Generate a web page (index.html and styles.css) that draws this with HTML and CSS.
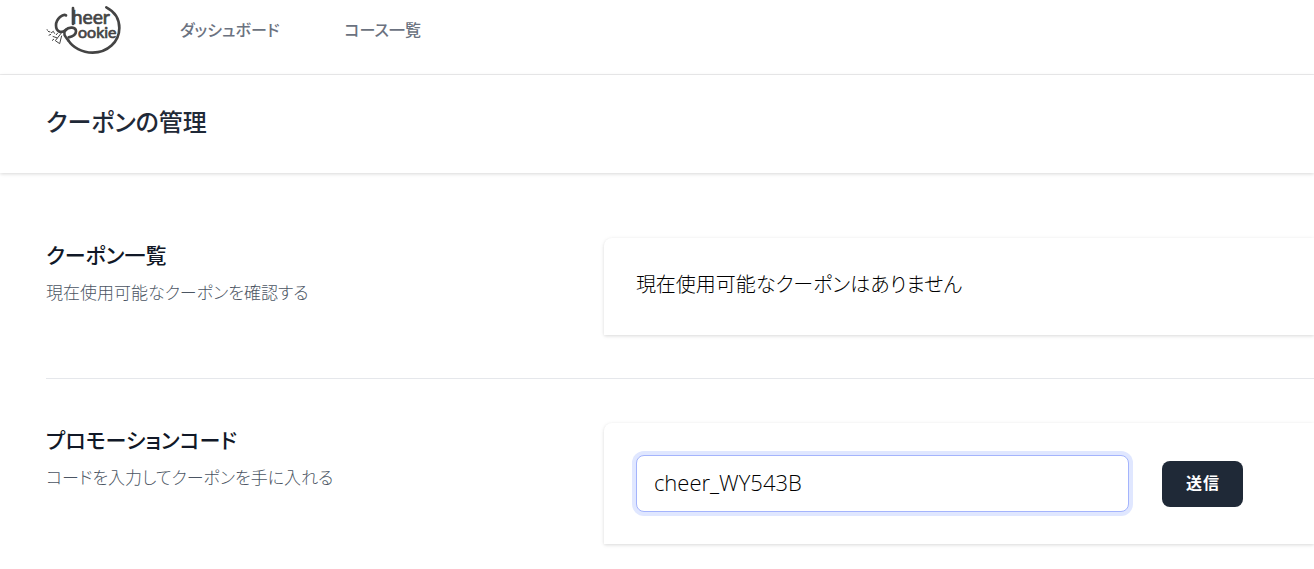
FILE: index.html
```html
<!DOCTYPE html>
<html lang="ja">
<head>
    <meta charset="UTF-8">
    <meta name="viewport" content="width=device-width, initial-scale=1.0">
    <title>クーポンの管理</title>
    <link rel="stylesheet" href="styles.css">
</head>
<body>
    <nav class="navbar">
        <a href="#" class="logo" aria-label="Cheer Rookie">
            <svg viewBox="30 15 225 150" width="75" height="50">
                <!-- ring and swashes -->
                <g class="logo-line">
                    <path d="M211 22 C238 36 250 58 250 84 C250 126 214 158 170 158 C138 158 110 142 97 121"/>
                    <path d="M90 46 C82 40 60 56 60 76 C60 96 76 101 89 90 C98 80 120 80 120 94 C120 105 108 110 98 112 M111 24 V72"/>
                    <path d="M89 90 C80 101 86 108 97 121"/>
                </g>
                <g class="logo-thin">
                    <path d="M76 99 L58 122 L71 131 L77 107 M50 109 L64 114 M45 99 L52 94 L56 101 M36 94 L43 96 M32 89 L36 91 M38 106 L45 103 M48 122 L54 117 M66 98 L60 105"/>
                </g>
                <text x="107" y="73" class="logo-top">heer</text>
                <text x="126" y="115" class="logo-bottom">ookie</text>
            </svg>
        </a>
        <a href="#" class="nav-link">ダッシュボード</a>
        <a href="#" class="nav-link">コース一覧</a>
    </nav>

    <header class="page-header">
        <h1>クーポンの管理</h1>
    </header>

    <main class="content">
        <section class="section">
            <div class="section-title">
                <h2>クーポン一覧</h2>
                <p>現在使用可能なクーポンを確認する</p>
            </div>
            <div class="card">
                <p class="card-text">現在使用可能なクーポンはありません</p>
            </div>
        </section>

        <hr class="divider">

        <section class="section">
            <div class="section-title">
                <h2><label for="code">プロモーションコード</label></h2>
                <p>コードを入力してクーポンを手に入れる</p>
            </div>
            <form class="card code-form">
                <input type="text" id="code" name="code" value="cheer_WY543B">
                <button type="button" class="btn">送信</button>
            </form>
        </section>
    </main>
</body>
</html>
```

FILE: styles.css
```css
* {
    box-sizing: border-box;
}

body {
    margin: 0;
    background-color: #fff;
    color: #000;
    font-family: "Noto Sans CJK JP", sans-serif;
    font-feature-settings: "palt";
}

h1, h2, p {
    margin: 0;
}

/* Navigation */
.navbar {
    display: flex;
    align-items: center;
    gap: 65px;
    padding: 5px 46px 19px;
    border-bottom: 1px solid #ededee;
}

.logo {
    display: flex;
    margin-right: -6px;
}

.logo-line {
    fill: none;
    stroke: #444;
    stroke-width: 8;
    stroke-linecap: round;
}

.logo-thin {
    fill: none;
    stroke: #444;
    stroke-width: 3;
}

.logo-top, .logo-bottom {
    font-family: Lato, sans-serif;
    fill: #444;
    stroke: #444;
    stroke-width: 2;
}

.logo-top {
    font-size: 58px;
}

.logo-bottom {
    font-size: 48px;
}

.nav-link {
    padding-bottom: 2px;
    color: #6b7280;
    font-size: 16px;
    font-weight: 500;
    line-height: 28px;
    text-decoration: none;
}

/* Page heading */
.page-header {
    padding: 29px 46px 35px;
    box-shadow: 0 1px 4px rgba(0, 0, 0, 0.1), 0 1px 3px rgba(0, 0, 0, 0.06);
}

.page-header h1 {
    color: #1f2937;
    font-size: 24px;
    font-weight: 500;
    line-height: 34px;
}

/* Sections */
.content {
    padding: 65px 0 24px 46px;
}

.section {
    display: grid;
    grid-template-columns: 17fr 23fr;
    gap: 33px;
}

.section-title h2 {
    color: #111827;
    font-size: 21px;
    font-weight: 500;
    line-height: 32px;
}

.section-title p {
    margin-top: 8px;
    color: #4b5563;
    font-size: 17px;
    font-weight: 300;
    line-height: 28px;
}

.card {
    padding: 32px 71px 32px 32px;
    border-top-left-radius: 8px;
    background-color: #fff;
    box-shadow: 0 1px 4px rgba(0, 0, 0, 0.1), 0 1px 3px rgba(0, 0, 0, 0.06);
}

.card-text {
    padding-bottom: 5px;
    font-size: 20px;
    font-weight: 300;
    line-height: 28px;
}

.divider {
    margin: 43px 0 44px;
    border: 0;
    border-top: 1px solid #e5e7eb;
}

/* Promotion code form */
.code-form {
    display: flex;
    align-items: center;
    gap: 33px;
}

.code-form input {
    flex: 1;
    min-width: 0;
    height: 57px;
    padding: 0 17px 3px;
    border: 1px solid #a4b4fc;
    border-radius: 8px;
    outline: none;
    box-shadow: 0 0 0 4px #e0e7ff;
    color: #000;
    font-family: "Open Sans", "Noto Sans CJK JP", sans-serif;
    font-size: 22px;
    font-weight: 350;
}

.btn {
    padding: 9px 23px 13px 24px;
    border: 0;
    border-radius: 8px;
    background-color: #1f2937;
    color: #fff;
    font-family: inherit;
    font-size: 16px;
    font-weight: 700;
    line-height: 24px;
    letter-spacing: 1px;
    cursor: pointer;
}
```
